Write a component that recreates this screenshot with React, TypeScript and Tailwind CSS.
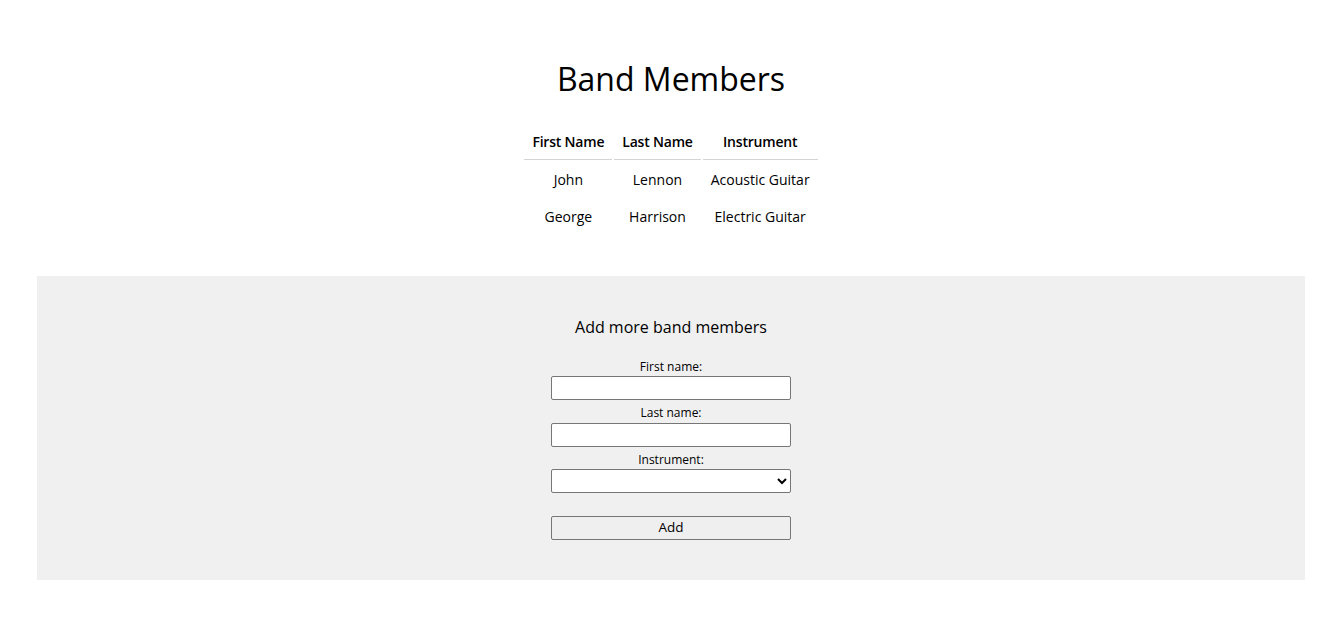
import React from "react";

export default function App() {
  const rows = [
    ["John", "Lennon", "Acoustic Guitar"],
    ["George", "Harrison", "Electric Guitar"],
  ];
  return (
    <div className="min-h-[630px] bg-white pl-[6px] font-['Open_Sans',sans-serif] text-black">
      <div className="flex flex-col items-center pt-[57px]">
        <h1 className="text-[32px] leading-[44px] font-normal">Band Members</h1>
        <table className="mt-[21px] border-separate border-spacing-[2px] text-[14px] leading-[19px]">
          <thead>
            <tr>
              {["First Name", "Last Name", "Instrument"].map((h) => (
                <th key={h} className="border-b border-[#d4d4d4] px-[8px] pt-[8px] pb-[8px] font-semibold tracking-[-0.2px]">
                  {h}
                </th>
              ))}
            </tr>
          </thead>
          <tbody>
            {rows.map((r) => (
              <tr key={r[0]}>
                {r.map((c) => (
                  <td key={c} className="p-[8px] text-center">
                    {c}
                  </td>
                ))}
              </tr>
            ))}
          </tbody>
        </table>
      </div>
      <div className="mx-[31px] mt-[40px] flex flex-col items-center bg-[#f0f0f0] pt-[40px] pb-[40px]">
        <h2 className="text-[16px] leading-[22px]">Add more band members</h2>
        <form className="mt-[21px] flex w-[240px] flex-col items-center" onSubmit={(e) => e.preventDefault()}>
          <label className="text-[12px] leading-[16px]">First name:</label>
          <input type="text" className="mt-[1px] h-[24px] w-[240px] rounded-[2px] border border-[#767676] bg-white" />
          <label className="mt-[5px] text-[12px] leading-[16px]">Last name:</label>
          <input type="text" className="mt-[2px] h-[24px] w-[240px] rounded-[2px] border border-[#767676] bg-white" />
          <label className="mt-[5px] text-[12px] leading-[16px]">Instrument:</label>
          <select className="mt-[1px] h-[24px] w-[240px] rounded-[2px] border border-[#767676] bg-white text-[13px]">
            <option value=""></option>
            <option>Guitar</option>
            <option>Bass</option>
            <option>Drums</option>
          </select>
          <button
            type="submit"
            className="mt-[23px] flex h-[24px] w-[240px] items-center justify-center rounded-[2px] border border-[#767676] bg-[#efefef] pb-[2px] text-[13.5px] leading-[18px]"
          >
            Add
          </button>
        </form>
      </div>
    </div>
  );
}
